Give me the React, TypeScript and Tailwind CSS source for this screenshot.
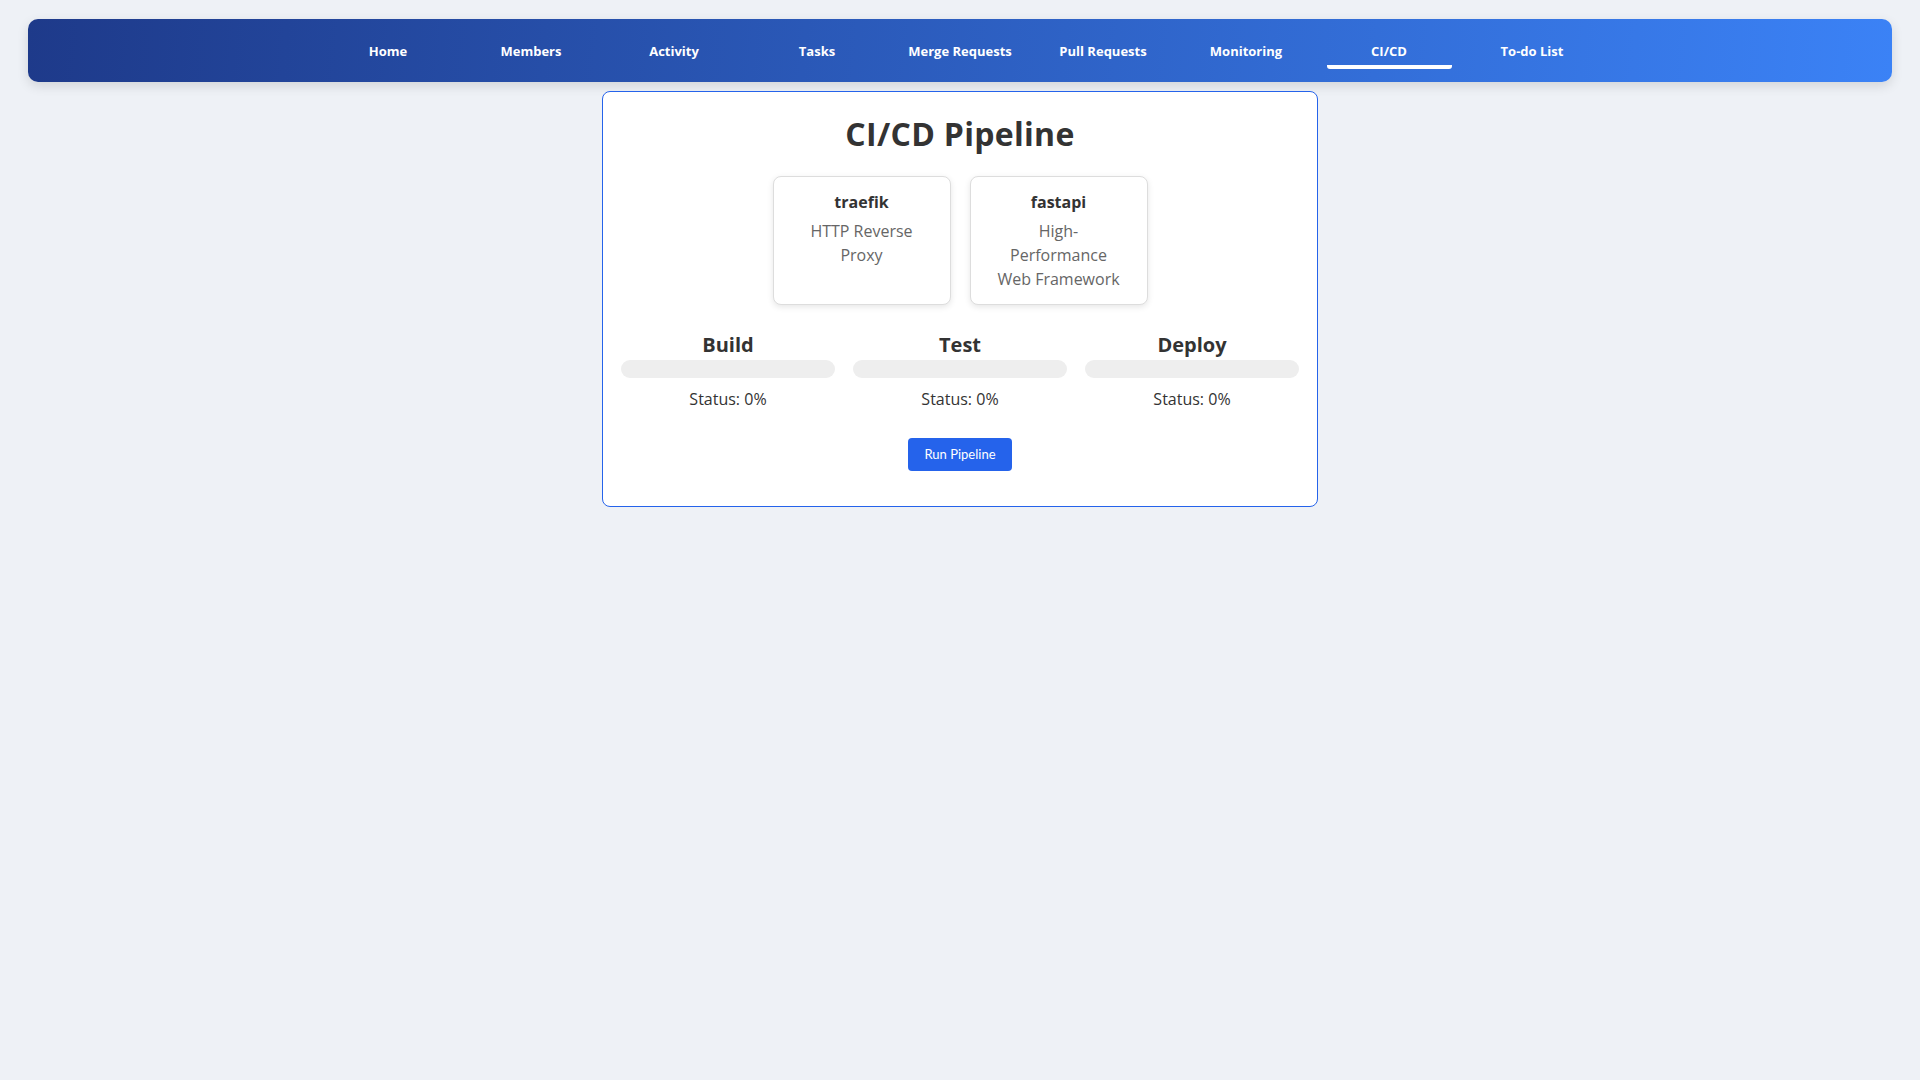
const navItems = ['Home', 'Members', 'Activity', 'Tasks', 'Merge Requests', 'Pull Requests', 'Monitoring', 'CI/CD', 'To-do List'];

const projects = [
  { name: 'traefik', description: 'HTTP Reverse Proxy' },
  { name: 'fastapi', description: 'High-Performance Web Framework' },
];

const stages = [
  { name: 'Build', progress: 0 },
  { name: 'Test', progress: 0 },
  { name: 'Deploy', progress: 0 },
];

const App = () => {
  return (
    <div className="min-h-screen bg-[#eef1f6] pt-[19px] px-[28px] font-['Open_Sans',sans-serif] text-[#333]">
      <nav className="h-[63px] rounded-[10px] bg-linear-[95deg] from-[#1e3a8a] to-[#3b82f6] shadow-[0_4px_12px_rgba(0,0,0,0.12)] flex items-center justify-center gap-[18px]">
        {navItems.map((item) => (
          <a
            key={item}
            href="#"
            className={`w-[125px] pt-[8px] pb-[4px] border-b-4 rounded-b-[3px] text-center text-white text-[13px] font-bold leading-[20px] ${
              item === 'CI/CD' ? 'border-white' : 'border-transparent'
            }`}>
            {item}
          </a>
        ))}
      </nav>

      <div className="mt-[9px] mx-auto w-[716px] bg-white border border-[#2563eb] rounded-lg p-[18px] pb-[35px]">
        <h2 className="text-center text-[32px] font-bold leading-[48px] tracking-[0.3px] text-[#333]">CI/CD Pipeline</h2>

        {/* Projects */}
        <div className="mt-[18px] flex justify-center gap-[19px]">
          {projects.map((project) => (
            <div
              key={project.name}
              className="w-[178px] bg-white border border-[#ddd] rounded-lg shadow-[0_2px_6px_rgba(0,0,0,0.1)] px-[21px] py-[13px] text-center">
              <h3 className="text-[16px] font-bold leading-[24px] text-[#333]">{project.name}</h3>
              <p className="mt-[5px] text-[16px] leading-[24px] text-[#666]">{project.description}</p>
            </div>
          ))}
        </div>

        {/* Stages */}
        <div className="mt-[25px] grid grid-cols-3 gap-[18px]">
          {stages.map((stage) => (
            <div key={stage.name} className="text-center">
              <h3 className="text-[20px] font-bold leading-[30px] text-[#333]">{stage.name}</h3>
              <div className="h-[18px] rounded-full bg-[#eee] overflow-hidden">
                <div className="h-full bg-[#2563eb]" style={{ width: `${stage.progress}%` }} />
              </div>
              <p className="mt-[9px] text-[16px] leading-[24px] text-[#333]">Status: {stage.progress}%</p>
            </div>
          ))}
        </div>

        <button className="mt-[27px] mx-auto block w-[104px] h-[33px] rounded-[4px] bg-[#2563eb] text-white text-[13px] font-['Lato',sans-serif]">
          Run Pipeline
        </button>
      </div>
    </div>
  );
};

export default App;
